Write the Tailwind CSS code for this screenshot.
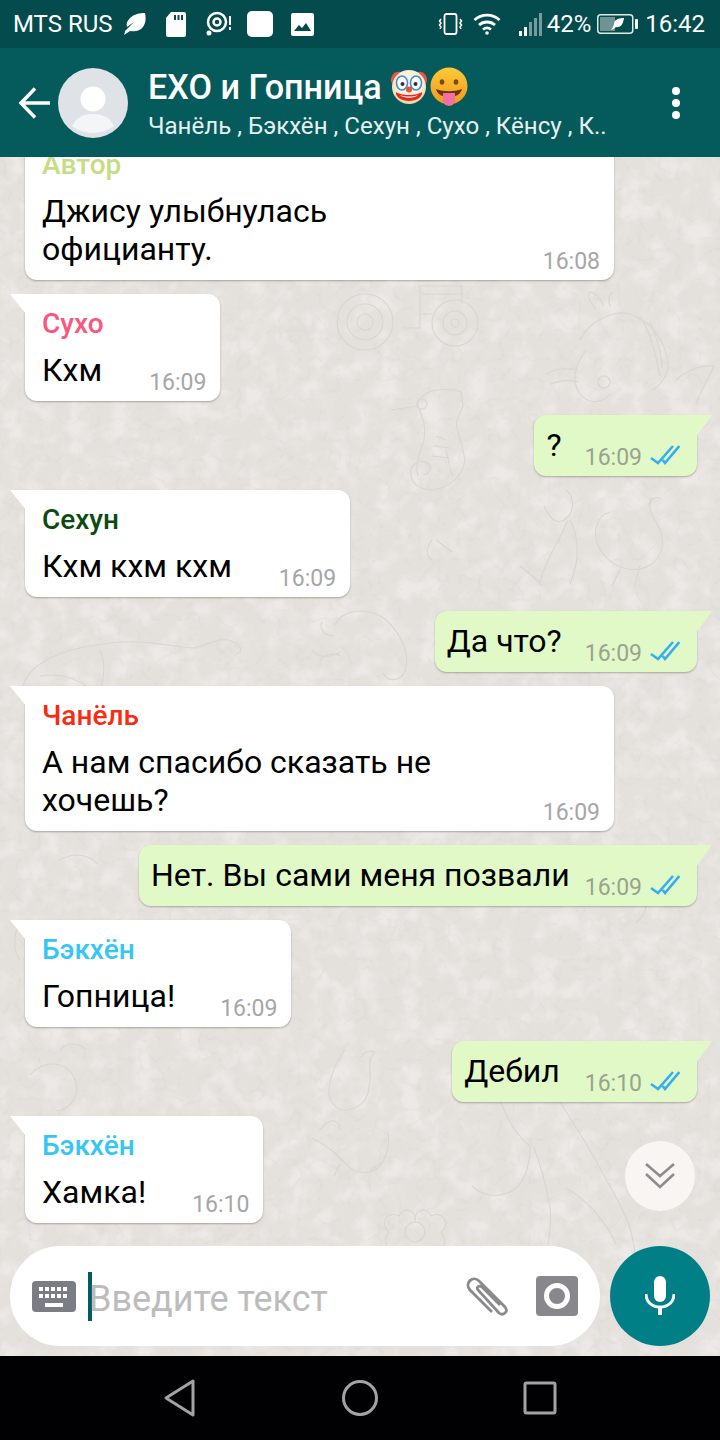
<!DOCTYPE html>
<html lang="ru">
<head>
  <meta charset="UTF-8">
  <meta name="viewport" content="width=device-width, initial-scale=1.0">
  <title>EXO и Гопница</title>
  <script src="https://cdn.jsdelivr.net/npm/@tailwindcss/browser@4"></script>
</head>
<body class="bg-black">
<div class="w-[720px] h-[1440px] flex flex-col overflow-hidden font-['Roboto',sans-serif]">

  <!-- Status bar -->
  <div class="h-[48px] shrink-0 bg-[#034b4c] flex items-center justify-between pl-[13px] pr-[15px] text-white text-[24px]">
    <div class="flex items-center">
      <span class="leading-none">MTS RUS</span>
      <svg class="ml-[10px]" width="25" height="24" viewBox="0 0 25 24" fill="#fff"><path d="M1 23c2-1 4-3 6-4 5 1 10 0 13-4 3-4 3-9 2-14-5 0-11 1-15 5-3 3-4 6-3 9l7-5-9 9c0 2-1 3-1 4z"/></svg>
      <svg class="ml-[17px]" width="22" height="26" viewBox="0 0 22 26" fill="#fff"><path d="M6 1h13a2 2 0 0 1 2 2v21a2 2 0 0 1-2 2H3a2 2 0 0 1-2-2V7z"/><path d="M9 4h2v5H9zM12.500 4h2v5h-2zM16 4h2v5h-2z" fill="#034b4c"/></svg>
      <svg class="ml-[19px]" width="26" height="26" viewBox="0 0 26 26" fill="none" stroke="#fff"><circle cx="11" cy="11" r="9" stroke-width="2.500"/><circle cx="11" cy="11" r="3.500" stroke-width="2.500"/><circle cx="3" cy="22" r="2.500" fill="#fff" stroke="none"/><path d="M24 5v9M24 16v3" stroke-width="2"/></svg>
      <div class="ml-[15px] w-[26px] h-[26px] rounded-[5px] bg-white"></div>
      <svg class="ml-[18px]" width="23" height="23" viewBox="0 0 23 23"><rect width="23" height="23" rx="2" fill="#fff"/><path d="M3 18l5-6 3 3 4-5 5 8z" fill="#034b4c"/></svg>
    </div>
    <div class="flex items-center">
      <svg width="25" height="24" viewBox="0 0 25 24" fill="none" stroke="#fff" stroke-width="1.800"><rect x="6.500" y="2" width="12" height="20" rx="2"/><path d="M3 7l-1.500 2 1.500 2-1.500 2 1.500 2-1 2M22 7l1.500 2-1.500 2 1.500 2-1.500 2 1 2" stroke-width="1.500"/></svg>
      <svg class="ml-[10px]" width="28" height="22" viewBox="0 0 28 22" fill="none" stroke="#fff" stroke-width="2.800"><path d="M1.500 7c7-6.500 18-6.500 25 0M6 12c4.500-4 11.500-4 16 0M10 16.500c2.500-2 5.500-2 8 0"/><circle cx="14" cy="20" r="1.800" fill="#fff" stroke="none"/></svg>
      <svg class="ml-[18px]" width="24" height="24" viewBox="0 0 24 24"><rect x="0" y="19" width="3" height="5" fill="#fff"/><rect x="5" y="15" width="3" height="9" fill="#fff"/><rect x="10" y="10" width="3" height="14" fill="#fff" fill-opacity=".45"/><rect x="15" y="6" width="3" height="18" fill="#fff" fill-opacity=".45"/><rect x="20" y="1" width="3" height="23" fill="#fff" fill-opacity=".45"/></svg>
      <span class="ml-[4px] leading-none">42%</span>
      <svg class="ml-[6px]" width="41" height="20" viewBox="0 0 41 20"><rect x=".75" y=".75" width="35" height="18.500" rx="3" fill="none" stroke="#dfe9e9" stroke-width="1.500"/><rect x="3" y="3" width="15" height="14" fill="#6f9493"/><rect x="38" y="5" width="3" height="10" rx="1" fill="#fff"/><path d="M14 16c3-1 4-2 5-3 3 1 7-1 8-9-4 0-9 1-10 5 0 2-1 4-3 7z" fill="#fff"/></svg>
      <span class="ml-[7px] leading-none">16:42</span>
    </div>
  </div>

  <!-- Toolbar -->
  <div class="h-[109px] shrink-0 bg-[#055a5b] flex items-center text-white relative z-10">
    <svg class="ml-[18px] shrink-0" width="32" height="32" viewBox="0 0 32 32" fill="none" stroke="#fff" stroke-width="3.500"><path d="M32 16H3M17 1.500L3 16l14 14.500"/></svg>
    <svg class="ml-[8px] shrink-0" width="70" height="70" viewBox="0 0 70 70"><circle cx="35" cy="35" r="35" fill="#dfe2e7"/><circle cx="35" cy="31" r="12.500" fill="#fff"/><path d="M14 58c4-9 12-12 21-12s17 3 21 12a35 35 0 0 1-42 0z" fill="#f4f5f6"/></svg>
    <div class="ml-[20px] pt-[5px] flex flex-col">
      <div class="flex items-center h-[40px]">
        <span class="text-[34.200px] font-medium leading-none">EXO и Гопница</span>
        <svg class="ml-[8px]" width="38" height="38" viewBox="0 0 38 38">
          <defs><radialGradient id="face" cx=".5" cy=".4" r=".6"><stop offset=".6" stop-color="#fdf0dc"/><stop offset="1" stop-color="#f6cfa0"/></radialGradient></defs>
          <path d="M1 14C0 6 6 3 10 4l18 0c4-1 10 2 9 10l-4 3H5z" fill="#e8543c"/>
          <circle cx="19" cy="19" r="17" fill="url(#face)"/>
          <ellipse cx="12" cy="15" rx="5.500" ry="7" fill="#fff" stroke="#3f8fd8" stroke-width="1.600"/>
          <ellipse cx="26" cy="15" rx="5.500" ry="7" fill="#fff" stroke="#3f8fd8" stroke-width="1.600"/>
          <circle cx="12.500" cy="16" r="2" fill="#2c3442"/><circle cx="25.500" cy="16" r="2" fill="#2c3442"/>
          <circle cx="19" cy="21.500" r="3" fill="#ef5230"/>
          <path d="M6 24c5 4 21 4 26 0 1 5-6 9-13 9S5 29 6 24z" fill="#e22c20"/>
          <path d="M10 27c5 2 13 2 18 0-3 3.500-15 3.500-18 0z" fill="#fff"/>
        </svg>
        <svg class="ml-[2px]" width="38" height="40" viewBox="0 0 38 40">
          <defs><linearGradient id="gold" x1="0" y1="0" x2="0" y2="1"><stop offset="0" stop-color="#fdc83c"/><stop offset="1" stop-color="#f09a1a"/></linearGradient></defs>
          <circle cx="19" cy="19" r="18.500" fill="url(#gold)"/>
          <ellipse cx="12" cy="15" rx="2.300" ry="2.800" fill="#7a4a12"/><ellipse cx="26" cy="15" rx="2.300" ry="2.800" fill="#7a4a12"/>
          <path d="M6 22c8 3 18 3 26 0-1 5-6 8-13 8S7 27 6 22z" fill="#6b3410"/>
          <path d="M13 26h12v7a6 6 0 0 1-12 0z" fill="#f0709f"/>
        </svg>
      </div>
      <div class="text-[24.100px] leading-[34px] mt-[2px] whitespace-nowrap text-[#e6efef]">Чанёль , Бэкхён , Сехун , Сухо , Кёнсу , К..</div>
    </div>
    <div class="ml-auto mr-[40px] flex flex-col gap-[4px]">
      <div class="w-[8px] h-[8px] rounded-full bg-white"></div>
      <div class="w-[8px] h-[8px] rounded-full bg-white"></div>
      <div class="w-[8px] h-[8px] rounded-full bg-white"></div>
    </div>
  </div>

  <!-- Conversation -->
  <div class="relative flex-1 min-h-0 bg-[#e4e0dc] overflow-hidden flex flex-col">
    <!-- wallpaper -->
    <svg class="absolute inset-0" width="720" height="1199" viewBox="0 157 720 1199" fill="none" stroke="#d9d5d0" stroke-width="1.100">
      <filter id="cells" color-interpolation-filters="sRGB"><feTurbulence type="turbulence" baseFrequency="0.05" numOctaves="2" seed="7"/><feColorMatrix values="0 0 0 0 .78  0 0 0 0 .76  0 0 0 0 .73  -4 0 0 0 .5"/></filter>
      <filter id="mottle" color-interpolation-filters="sRGB"><feTurbulence type="fractalNoise" baseFrequency="0.045" numOctaves="3" seed="4"/><feColorMatrix values="0 0 0 0 1  0 0 0 0 1  0 0 0 0 1  3 0 0 0 -1.300"/></filter>
      <rect x="0" y="157" width="720" height="1199" filter="url(#mottle)" stroke="none" opacity=".3"/>
      <rect x="0" y="157" width="720" height="1199" filter="url(#cells)" stroke="none" opacity=".28"/>
      <!-- tractor -->
      <circle cx="365" cy="322" r="28"/><circle cx="365" cy="322" r="18"/><circle cx="365" cy="322" r="8"/><circle cx="455" cy="323" r="23"/><circle cx="455" cy="323" r="12"/><circle cx="455" cy="323" r="4"/>
      <path d="M402 328h18v-14h12M418 286h44v18M420 286v28M422 294h40"/>
      <!-- seahorse -->
      <path d="M391 410l26-4c2-10 12-16 22-16 10-2 16 0 22 2l2 14-6 14c-2 8 2 14 4 22l4 18c-2 14-12 24-24 28-14 4-28 0-30-12-2-10 6-16 14-14 8 2 6 14-2 12M418 406c6 14 8 22 6 34-4 14-10 24-6 36"/>
      <circle cx="422" cy="404" r="5"/>
      <path d="M436 436l10 4M434 446l16 2M432 456l18 2M446 450l6 26"/>
      <!-- fish -->
      <path d="M580 340c10-20 34-30 50-26 24 8 36 30 38 50 0 12-8 22-16 26M586 350c-10 14-16 30-6 44 10 12 24 8 30 0M546 374c10-6 22-6 32-4M550 384c10-4 20-4 28-2M640 316c12 20 16 40 20 60M650 322c8 18 12 32 12 46M676 380c10-10 28-16 38-14-6 14-14 26-18 38M596 310c-4-6-10-14-6-18 6 0 10 6 14 14M610 306c-2-6-2-10 2-14"/>
      <circle cx="604" cy="382" r="6"/>
      <!-- bird and leaves -->
      <path d="M610 512c-14 4-20 24-8 40 12 18 34 22 50 12 12-10 14-26 4-42-6-8-8-16-4-24M660 498c-6-2-10 2-12 8M640 566l-6 22M620 570l-8 16"/>
      <path d="M566 490c10 8 8 24-2 30-10 6-16-6-20-14M568 520c-8 20-22 38-28 62M570 520c10 20 10 40 0 64M520 566c8 6 16 12 22 20"/>
      <path d="M432 540c-8 10-4 18 0 20M436 540l16 12"/>
      <!-- dinosaur -->
      <path d="M22 690c6-32 50-44 100-48 30-2 56 6 72 6 14-2 20-10 34-8 14 4 16 12 8 14M40 676c24-4 42 6 52 14M100 650c6 14 4 28 0 40M320 660c6-6 14-8 20-4M335 625c6-14 30-20 50-6 16 14 26 36 20 52-4 10-18 12-22 2M322 622c-4 8 4 14 12 14M312 650c6 8 20 8 28 2"/>
      <!-- lower left doodles -->
      <path d="M30 1075c14-16 36-14 44 2s-2 32-18 34M90 1165c16 4 26 20 22 36M60 1050c6-8 20-8 26 0"/>
      <path d="M640 885c10 14 8 28-4 38M60 860c14-8 28-6 38 4M20 920c-6 14-8 30 0 40"/>
      <!-- elephant -->
      <path d="M345 1050c-8 10-14 24-16 38-2 12 8 24 18 22 14-2 22-12 22-24 4-12-4-24 6-34 -6-2-12 0-14 6M320 1130c12-16 20-8 20 0M312 1138c8 4 24 14 34 26 8 10 24 12 34 2 6-8 10-18 8-34M370 1170l12 -8M340 1164l-6 12"/>
      <!-- dragon neck -->
      <path d="M500 1100c6 18 16 34 30 46 0 20-6 44-26 48-14 4-26-2-32-8M560 1102c10 16 26 40 40 66 12 24 22 36 30 60 6 22 8 40 4 60-2 16-12 26-26 22M534 1148c8 20 12 38 16 58 2 20-2 40-6 60M566 1188c24 14 40 34 50 56"/>
      <!-- flower -->
      <circle cx="415" cy="1232" r="10"/><path d="M415 1222c-2-12 12-16 16-6 12-6 20 8 10 16 8 8 2 22-10 18M415 1222c2-12-12-16-16-6-12-6-20 8-10 16-8 8-2 22 10 18"/>
    </svg>

    <!-- messages -->
    <div class="relative flex-1 min-h-0 flex flex-col gap-[14px] mt-[-22px]">

      <div class="relative self-start ml-[25px] w-[589px] h-[145px] shrink-0 bg-white rounded-[12px] shadow-[0_1px_2px_rgba(0,0,0,.28)] pl-[17px] pr-[14px] pt-[15px]">
        <div class="text-[28px] font-medium leading-[30px] text-[#c6dd85]">Автор</div>
        <div class="flex items-end justify-between mt-[12px]">
          <div class="text-[32px] leading-[38px] text-black">Джису улыбнулась<br>официанту.</div>
          <span class="text-[23px] leading-[30px] text-[#a6a6a6] mb-[-9px]">16:08</span>
        </div>
      </div>

      <div class="relative self-start ml-[25px] h-[107px] shrink-0 bg-white rounded-[12px] rounded-tl-none shadow-[0_1px_2px_rgba(0,0,0,.28)] pl-[17px] pr-[14px] pt-[15px]">
        <div class="absolute left-[-15px] top-0 w-[16px] h-[20px] bg-white [clip-path:polygon(0_0,100%_0,100%_100%)]"></div>
        <div class="text-[28px] font-medium leading-[30px] text-[#f9577d]">Сухо</div>
        <div class="flex items-end gap-[47px] mt-[12px]">
          <div class="text-[32px] leading-[38px] text-black">Кхм</div>
          <span class="text-[23px] leading-[30px] text-[#a6a6a6] mb-[-9px]">16:09</span>
        </div>
      </div>

      <div class="relative self-end mr-[23px] h-[61px] shrink-0 bg-[#e1f9c7] rounded-[12px] rounded-tr-none shadow-[0_1px_2px_rgba(0,0,0,.28)] pl-[13px] pr-[17px] flex items-end">
        <div class="absolute right-[-15px] top-0 w-[16px] h-[22px] bg-[#e1f9c7] [clip-path:polygon(0_0,100%_0,0_100%)]"></div>
        <div class="text-[32px] leading-[38px] text-black mb-[12px]">?</div>
        <span class="ml-[23px] text-[23px] leading-[30px] text-[#9aa38f] mb-[3px]">16:09</span>
        <svg class="ml-[8px] mb-[11px]" width="30" height="20" viewBox="0 0 30 20" fill="none" stroke="#35aef0" stroke-width="2.600"><path d="M1 13l7 5L23 1M12.700 15l2.300 3L29.300 1"/></svg>
      </div>

      <div class="relative self-start ml-[25px] h-[107px] shrink-0 bg-white rounded-[12px] rounded-tl-none shadow-[0_1px_2px_rgba(0,0,0,.28)] pl-[17px] pr-[14px] pt-[15px]">
        <div class="absolute left-[-15px] top-0 w-[16px] h-[20px] bg-white [clip-path:polygon(0_0,100%_0,100%_100%)]"></div>
        <div class="text-[28px] font-medium leading-[30px] text-[#0d4a12]">Сехун</div>
        <div class="flex items-end gap-[47px] mt-[12px]">
          <div class="text-[32px] leading-[38px] text-black">Кхм кхм кхм</div>
          <span class="text-[23px] leading-[30px] text-[#a6a6a6] mb-[-9px]">16:09</span>
        </div>
      </div>

      <div class="relative self-end mr-[23px] h-[61px] shrink-0 bg-[#e1f9c7] rounded-[12px] rounded-tr-none shadow-[0_1px_2px_rgba(0,0,0,.28)] pl-[12px] pr-[17px] flex items-end">
        <div class="absolute right-[-15px] top-0 w-[16px] h-[22px] bg-[#e1f9c7] [clip-path:polygon(0_0,100%_0,0_100%)]"></div>
        <div class="text-[32px] leading-[38px] text-black mb-[12px]">Да что?</div>
        <span class="ml-[23px] text-[23px] leading-[30px] text-[#9aa38f] mb-[3px]">16:09</span>
        <svg class="ml-[8px] mb-[11px]" width="30" height="20" viewBox="0 0 30 20" fill="none" stroke="#35aef0" stroke-width="2.600"><path d="M1 13l7 5L23 1M12.700 15l2.300 3L29.300 1"/></svg>
      </div>

      <div class="relative self-start ml-[25px] w-[589px] h-[145px] shrink-0 bg-white rounded-[12px] rounded-tl-none shadow-[0_1px_2px_rgba(0,0,0,.28)] pl-[17px] pr-[14px] pt-[15px]">
        <div class="absolute left-[-15px] top-0 w-[16px] h-[20px] bg-white [clip-path:polygon(0_0,100%_0,100%_100%)]"></div>
        <div class="text-[28px] font-medium leading-[30px] text-[#fb2a10]">Чанёль</div>
        <div class="flex items-end justify-between mt-[12px]">
          <div class="text-[32px] leading-[38px] text-black">А нам спасибо сказать не<br>хочешь?</div>
          <span class="text-[23px] leading-[30px] text-[#a6a6a6] mb-[-9px]">16:09</span>
        </div>
      </div>

      <div class="relative self-end mr-[23px] h-[61px] shrink-0 bg-[#e1f9c7] rounded-[12px] rounded-tr-none shadow-[0_1px_2px_rgba(0,0,0,.28)] pl-[12px] pr-[17px] flex items-end">
        <div class="absolute right-[-15px] top-0 w-[16px] h-[22px] bg-[#e1f9c7] [clip-path:polygon(0_0,100%_0,0_100%)]"></div>
        <div class="text-[32px] leading-[38px] text-black mb-[12px]">Нет. Вы сами меня позвали</div>
        <span class="ml-[15px] text-[23px] leading-[30px] text-[#9aa38f] mb-[3px]">16:09</span>
        <svg class="ml-[8px] mb-[11px]" width="30" height="20" viewBox="0 0 30 20" fill="none" stroke="#35aef0" stroke-width="2.600"><path d="M1 13l7 5L23 1M12.700 15l2.300 3L29.300 1"/></svg>
      </div>

      <div class="relative self-start ml-[25px] h-[107px] shrink-0 bg-white rounded-[12px] rounded-tl-none shadow-[0_1px_2px_rgba(0,0,0,.28)] pl-[17px] pr-[14px] pt-[15px]">
        <div class="absolute left-[-15px] top-0 w-[16px] h-[20px] bg-white [clip-path:polygon(0_0,100%_0,100%_100%)]"></div>
        <div class="text-[28px] font-medium leading-[30px] text-[#35c6f5]">Бэкхён</div>
        <div class="flex items-end gap-[45px] mt-[12px]">
          <div class="text-[32px] leading-[38px] text-black">Гопница!</div>
          <span class="text-[23px] leading-[30px] text-[#a6a6a6] mb-[-9px]">16:09</span>
        </div>
      </div>

      <div class="relative self-end mr-[23px] h-[61px] shrink-0 bg-[#e1f9c7] rounded-[12px] rounded-tr-none shadow-[0_1px_2px_rgba(0,0,0,.28)] pl-[12px] pr-[17px] flex items-end">
        <div class="absolute right-[-15px] top-0 w-[16px] h-[22px] bg-[#e1f9c7] [clip-path:polygon(0_0,100%_0,0_100%)]"></div>
        <div class="text-[32px] leading-[38px] text-black mb-[12px]">Дебил</div>
        <span class="ml-[25px] text-[23px] leading-[30px] text-[#9aa38f] mb-[3px]">16:10</span>
        <svg class="ml-[8px] mb-[11px]" width="30" height="20" viewBox="0 0 30 20" fill="none" stroke="#35aef0" stroke-width="2.600"><path d="M1 13l7 5L23 1M12.700 15l2.300 3L29.300 1"/></svg>
      </div>

      <div class="relative self-start ml-[25px] h-[107px] shrink-0 bg-white rounded-[12px] rounded-tl-none shadow-[0_1px_2px_rgba(0,0,0,.28)] pl-[17px] pr-[14px] pt-[15px]">
        <div class="absolute left-[-15px] top-0 w-[16px] h-[20px] bg-white [clip-path:polygon(0_0,100%_0,100%_100%)]"></div>
        <div class="text-[28px] font-medium leading-[30px] text-[#35c6f5]">Бэкхён</div>
        <div class="flex items-end gap-[46px] mt-[12px]">
          <div class="text-[32px] leading-[38px] text-black">Хамка!</div>
          <span class="text-[23px] leading-[30px] text-[#a6a6a6] mb-[-9px]">16:10</span>
        </div>
      </div>
    </div>

    <!-- scroll to bottom -->
    <div class="absolute right-[25px] bottom-[145px] w-[70px] h-[70px] rounded-full bg-[#f8f5f3] flex items-center justify-center">
      <svg width="32" height="28" viewBox="0 0 32 28" fill="none" stroke="#8c8c8c" stroke-width="2.600"><path d="M2 2l14 12L30 2M2 12l14 13 14-13"/></svg>
    </div>

    <!-- input row -->
    <div class="relative shrink-0 flex items-center justify-between pl-[10px] pr-[10px] pb-[10px]">
      <div class="w-[590px] h-[100px] rounded-full bg-white flex items-center pl-[22px] pr-[22px]">
        <svg width="44" height="31" viewBox="0 0 44 31"><rect width="44" height="31" rx="4" fill="#7b7d84"/><g fill="#fff"><rect x="7" y="6" width="4" height="4"/><rect x="13" y="6" width="4" height="4"/><rect x="19" y="6" width="4" height="4"/><rect x="25" y="6" width="4" height="4"/><rect x="31" y="6" width="4" height="4"/><rect x="7" y="13" width="4" height="4"/><rect x="13" y="13" width="4" height="4"/><rect x="19" y="13" width="4" height="4"/><rect x="25" y="13" width="4" height="4"/><rect x="31" y="13" width="4" height="4"/><rect x="13" y="22" width="18" height="4"/></g></svg>
        <div class="ml-[12px] w-[4px] h-[49px] bg-[#055a5b] shrink-0"></div>
        <span class="ml-[-3px] pt-[6px] text-[36px] leading-none text-[#bdbcbc]">Введите текст</span>
        <svg class="ml-auto" width="44" height="40" viewBox="0 0 44 40" fill="none" stroke="#8a8a8c" stroke-width="2.800"><path d="M26 36L4 14c-6-7 3-15 9-9l26 26c4 5-2 9-6 6L12 14c-2-3 1-5 4-3l18 18"/></svg>
        <svg class="ml-[26px]" width="42" height="40" viewBox="0 0 42 40"><path d="M4 0h34a4 4 0 0 1 4 4v32a4 4 0 0 1-4 4H4a4 4 0 0 1-4-4V4a4 4 0 0 1 4-4z" fill="#88888c"/><circle cx="21" cy="20" r="10.500" fill="#88888c" stroke="#fff" stroke-width="5"/></svg>
      </div>
      <div class="w-[100px] h-[100px] rounded-full bg-[#008086] flex items-center justify-center">
        <svg width="30" height="40" viewBox="0 0 30 40" fill="#fff"><rect x="9" y="0" width="12" height="26" rx="6"/><path d="M1 18c0 8 6 13 14 13s14-5 14-13" fill="none" stroke="#fff" stroke-width="3"/><rect x="13" y="30" width="4" height="9"/></svg>
      </div>
    </div>
  </div>

  <!-- Navigation bar -->
  <div class="h-[84px] shrink-0 bg-[#010002] flex items-center justify-center gap-[145px]">
    <svg width="34" height="38" viewBox="0 0 34 38" fill="none" stroke="#a3a3a3" stroke-width="3" stroke-linejoin="round"><path d="M30 2v34L3 19z"/></svg>
    <svg width="36" height="36" viewBox="0 0 36 36" fill="none" stroke="#a3a3a3" stroke-width="3"><circle cx="18" cy="18" r="16.500"/></svg>
    <svg width="34" height="34" viewBox="0 0 34 34" fill="none" stroke="#a3a3a3" stroke-width="3" stroke-linejoin="round"><rect x="2" y="2" width="30" height="30" rx="1.500"/></svg>
  </div>
</div>
</body>
</html>
